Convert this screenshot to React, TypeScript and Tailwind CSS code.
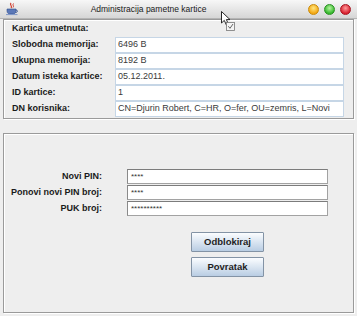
import React from 'react';

const info: [string, string][] = [
  ['Slobodna memorija:', '6496 B'],
  ['Ukupna memorija:', '8192 B'],
  ['Datum isteka kartice:', '05.12.2011.'],
  ['ID kartice:', '1'],
  ['DN korisnika:', 'CN=Djurin Robert, C=HR, O=fer, OU=zemris, L=Novi'],
];

const pins: [string, string][] = [
  ['Novi PIN:', '****'],
  ['Ponovi novi PIN broj:', '****'],
  ['PUK broj:', '**********'],
];

const JavaCup = () => (
  <svg width="14" height="14" viewBox="0 0 14 14">
    <path d="M6 1 C4 3 8 4 6 6" stroke="#d23a2a" strokeWidth="1.2" fill="none" />
    <path d="M8.5 1.5 C7 3 9.5 4 8 5.5" stroke="#d23a2a" strokeWidth="1" fill="none" />
    <path d="M2 7 H11 V9 C11 11 9.5 12 8 12 H5 C3.5 12 2 11 2 9 Z" fill="#5b78b8" stroke="#34508f" strokeWidth="0.6" />
    <path d="M11 8 C13 8 13 10.5 10.5 10.5" stroke="#34508f" strokeWidth="0.9" fill="none" />
    <path d="M1 12.6 H12.5" stroke="#7d96c8" strokeWidth="1" />
  </svg>
);

const Light = ({ cls }: { cls: string }) => (
  <div className={`w-[11px] h-[11px] rounded-full ${cls}`} />
);

const TitleBar = () => (
  <div className="h-[19px] shrink-0 flex items-center pl-[5px] pr-[6px] bg-gradient-to-b from-[#f7f7f7] to-[#d6d6d6] border-b border-[#b4b4b4]">
    <JavaCup />
    <div className="flex-1 text-center text-[8.5px] text-[#1a1a1a] leading-none pr-[30px]">
      Administracija pametne kartice
    </div>
    <div className="flex items-center gap-[5px]">
      <Light cls="bg-[radial-gradient(circle_at_50%_35%,#ffe680,#f3a712_70%)] border border-[#c98a0a]" />
      <Light cls="bg-[radial-gradient(circle_at_50%_35%,#b8f5a0,#34b82d_70%)] border border-[#2a8f22]" />
      <Light cls="bg-[radial-gradient(circle_at_50%_35%,#ff9a9a,#d8202f_70%)] border border-[#a8141f]" />
    </div>
  </div>
);

const Cursor = () => (
  <div className="absolute left-[221px] top-[11px] pointer-events-none">
    <svg width="16" height="22" viewBox="0 0 16 22">
      <path d="M0.5 0.5 L0.5 12 L3.3 9.4 L5.6 14.5 L7.6 13.6 L5.4 8.6 L9 8.6 Z" fill="#fff" stroke="#111" strokeWidth="0.9" />
      <rect x="5.5" y="11.5" width="8" height="8" fill="#f4f4f4" stroke="#777" strokeWidth="0.8" />
      <path d="M7.3 15.2 L9 17.3 L12 13" stroke="#555" strokeWidth="0.9" fill="none" />
    </svg>
  </div>
);

const Panel = ({ className, children }: { className?: string; children: React.ReactNode }) => (
  <div className={`border border-[#9a9a9a] shadow-[inset_1px_1px_0_#ffffff,1px_1px_0_#ffffff] ${className ?? ''}`}>
    {children}
  </div>
);

export default function App() {
  return (
    <div className="relative w-[357px] h-[316px] bg-[#eeeeee] overflow-hidden flex flex-col font-['Liberation_Sans',Arial,sans-serif]">
      <TitleBar />
      <div className="flex-1 flex flex-col px-[3px] pb-[3px] gap-[14px]">
        <Panel className="h-[100px] overflow-hidden pl-[8px] text-[9px]">
          <div className="h-[17px] flex items-center font-bold text-[#1a1a1a]">Kartica umetnuta:</div>
          {info.map(([label, value]) => (
            <div key={label} className="h-[16px] flex items-center">
              <div className="w-[103px] font-bold text-[#1a1a1a]">{label}</div>
              <div className="w-[229px] h-[16px] bg-white border border-[#c6d6e6] pl-[2px] flex items-center text-[#3a3a3a] whitespace-nowrap overflow-hidden">
                {value}
              </div>
            </div>
          ))}
        </Panel>
        <Panel className="flex-1 pt-[35px] text-[9px]">
          <div className="flex flex-col gap-[1px]">
            {pins.map(([label, value]) => (
              <div key={label} className="h-[15px] flex items-center">
                <div className="w-[98px] text-right font-bold text-[#1a1a1a]">{label}</div>
                <div className="ml-[25px] w-[201px] h-[15px] bg-white border border-[#a2a2a2] border-t-[#7c7c7c] border-l-[#8a8a8a] pl-[3px] flex items-center text-[8px] text-[#333] leading-none">
                  {value}
                </div>
              </div>
            ))}
          </div>
          <div className="ml-[123px] w-[201px] mt-[16px] flex flex-col items-center gap-[5px]">
            {['Odblokiraj', 'Povratak'].map((b) => (
              <button
                key={b}
                className="w-[73px] h-[20px] border border-[#8393a5] rounded-[1px] bg-gradient-to-b from-[#fbfdff] to-[#b9cde3] text-[9.5px] font-bold text-[#1e1e1e]"
              >
                {b}
              </button>
            ))}
          </div>
        </Panel>
      </div>
      <Cursor />
    </div>
  );
}
